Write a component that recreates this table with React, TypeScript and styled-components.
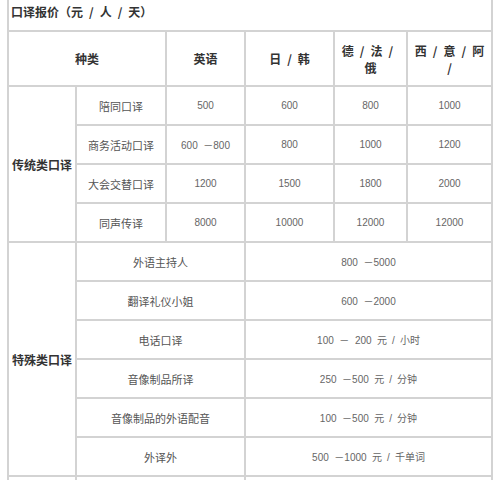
import React from 'react';
import styled, { createGlobalStyle } from 'styled-components';

const GlobalStyle = createGlobalStyle`
  html, body {
    margin: 0;
    padding: 0;
    background: #ffffff;
  }
  body {
    font-family: "Liberation Sans", "Noto Sans CJK SC", sans-serif;
  }
`;

const LINE = '#d3d3d3';
const SEP = '\u2002/\u2002';

// price grid: six fixed columns, old-school table look
const PriceGrid = styled.div`
  display: grid;
  grid-template-columns: 68px 90px 79px 89px 73px 85px;
  grid-template-rows: 32px 55px repeat(11, 39px);
  width: 486px;
  margin-left: 7px;
  border-left: 2px solid ${LINE};
  box-sizing: border-box;
`;

const Cell = styled.div<{ $span?: number; $rows?: number }>`
  grid-column: span ${(p) => p.$span ?? 1};
  grid-row: span ${(p) => p.$rows ?? 1};
  display: flex;
  align-items: center;
  justify-content: center;
  text-align: center;
  box-sizing: border-box;
  border-right: 2px solid ${LINE};
  border-bottom: 2px solid ${LINE};
  padding: 0 4px;
  min-width: 0;
`;

const TitleCell = styled(Cell)`
  justify-content: flex-start;
  align-items: flex-start;
  padding: 5px 2px 0;
  font-family: "Noto Sans CJK SC", sans-serif;
  font-size: 12px;
  font-weight: bold;
  color: #333;
  line-height: 14px;
  white-space: pre;
`;

const HeadCell = styled(Cell)`
  font-family: "Noto Sans CJK SC", sans-serif;
  font-size: 12px;
  font-weight: bold;
  color: #333;
  line-height: 17px;
`;

const GroupCell = styled(HeadCell)`
  padding: 0;
  white-space: nowrap;
`;

const LabelCell = styled(Cell)`
  font-family: "Noto Sans CJK SC", sans-serif;
  font-size: 11px;
  color: #555;
`;

const PriceCell = styled(Cell)`
  font-family: "Liberation Sans", "Noto Sans CJK SC", sans-serif;
  font-size: 10px;
  color: #666;
  white-space: pre;
`;

const traditional = [
  { name: '陪同口译', prices: ['500', '600', '800', '1000'] },
  { name: '商务活动口译', prices: ['600  －800', '800', '1000', '1200'] },
  { name: '大会交替口译', prices: ['1200', '1500', '1800', '2000'] },
  { name: '同声传译', prices: ['8000', '10000', '12000', '12000'] },
];

const special = [
  { name: '外语主持人', price: '800  －5000' },
  { name: '翻译礼仪小姐', price: '600  －2000' },
  { name: '电话口译', price: `100  －  200  元${SEP}小时` },
  { name: '音像制品所译', price: `250  －500  元${SEP}分钟` },
  { name: '音像制品的外语配音', price: `100  －500  元${SEP}分钟` },
  { name: '外译外', price: `500  －1000  元${SEP}千单词` },
];

const App: React.FC = () => (
  <>
    <GlobalStyle />
    <PriceGrid>
      <TitleCell $span={6}>{`口译报价（元${SEP}人${SEP}天）`}</TitleCell>

      {/* header */}
      <HeadCell $span={2}>种类</HeadCell>
      <HeadCell>英语</HeadCell>
      <HeadCell>{`日${SEP}韩`}</HeadCell>
      <HeadCell>
        {`德${SEP}法${SEP}`}
        <br />俄
      </HeadCell>
      <HeadCell>
        {`西${SEP}意${SEP}阿`}
        <br />/
      </HeadCell>

      {/* traditional */}
      <GroupCell $rows={traditional.length}>传统类口译</GroupCell>
      {traditional.map((row) => (
        <React.Fragment key={row.name}>
          <LabelCell>{row.name}</LabelCell>
          {row.prices.map((p, i) => (
            <PriceCell key={i}>{p}</PriceCell>
          ))}
        </React.Fragment>
      ))}

      {/* special */}
      <GroupCell $rows={special.length}>特殊类口译</GroupCell>
      {special.map((row) => (
        <React.Fragment key={row.name}>
          <LabelCell $span={2}>{row.name}</LabelCell>
          <PriceCell $span={3}>{row.price}</PriceCell>
        </React.Fragment>
      ))}

      {/* next block, cut off by the window */}
      <GroupCell />
      <LabelCell $span={2} />
      <PriceCell $span={3} />
    </PriceGrid>
  </>
);

export default App;
